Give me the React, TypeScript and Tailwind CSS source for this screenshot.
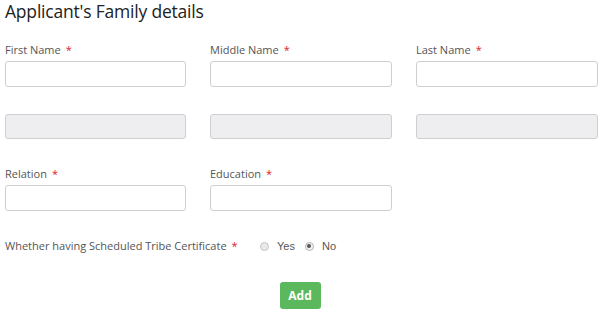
import React from 'react'

const FONT = "font-['Open_Sans','Liberation_Sans',sans-serif]"

function Label({ text, required = true }: { text: string; required?: boolean }) {
  return (
    <div className="flex h-[14px] items-center text-[11px] leading-[14px] text-[#555]">
      {text}
      {required && <span className="ml-[5px] text-[#d9232e]">*</span>}
    </div>
  )
}

function Field({ label, disabled = false }: { label?: string; disabled?: boolean }) {
  return (
    <div className="flex flex-col gap-[4px]">
      {label ? <Label text={label} /> : <div className="h-[14px]" />}
      <input
        disabled={disabled}
        className={
          disabled
            ? 'h-[25px] w-full rounded-[3px] border border-[#cfcfd2] bg-[#eeedf0]'
            : 'h-[26px] w-full rounded-[3px] border border-[#cfcfd2] bg-white'
        }
      />
    </div>
  )
}

function Radio({ label, checked }: { label: string; checked?: boolean }) {
  return (
    <label className="flex items-center gap-[8px] font-['Liberation_Sans',sans-serif] text-[11px] text-[#555]">
      <span
        className={
          checked
            ? 'flex h-[9px] w-[9px] items-center justify-center rounded-full border border-[#b5b5b5] bg-[#f1f1f1]'
            : 'h-[9px] w-[9px] rounded-full border border-[#c4c4c4] bg-[#e9e9e9]'
        }
      >
        {checked && <span className="h-[4px] w-[4px] rounded-full bg-[#555]" />}
      </span>
      {label}
    </label>
  )
}

export default function App() {
  return (
    <div className={`${FONT} h-[311px] w-[600px] overflow-hidden bg-white px-[5px]`}>
      <h2 className="h-[21px] pt-[1px] text-[17.5px] font-medium leading-[20px] tracking-[-0.2px] text-[#222]">
        Applicant's Family details
      </h2>

      <div className="mt-[22px] grid grid-cols-[181px_182px_182px] gap-x-6">
        <Field label="First Name" />
        <Field label="Middle Name" />
        <Field label="Last Name" />
      </div>

      <div className="mt-[9px] grid grid-cols-[181px_182px_182px] gap-x-6">
        <Field disabled />
        <Field disabled />
        <Field disabled />
      </div>

      <div className="mt-[28px] grid grid-cols-[181px_182px_182px] gap-x-6">
        <Field label="Relation" />
        <Field label="Education" />
      </div>

      <div className="mt-[28px] flex h-[14px] items-center">
        <div className="w-[255px]">
          <Label text="Whether having Scheduled Tribe Certificate" />
        </div>
        <div className="flex items-center gap-[10px]">
          <Radio label="Yes" />
          <Radio label="No" checked />
        </div>
      </div>

      <div className="mt-[29px] flex justify-center">
        <button className="h-[27px] w-[41px] rounded-[3px] bg-[#5cb85c] text-[12px] font-bold text-white">
          Add
        </button>
      </div>
    </div>
  )
}
